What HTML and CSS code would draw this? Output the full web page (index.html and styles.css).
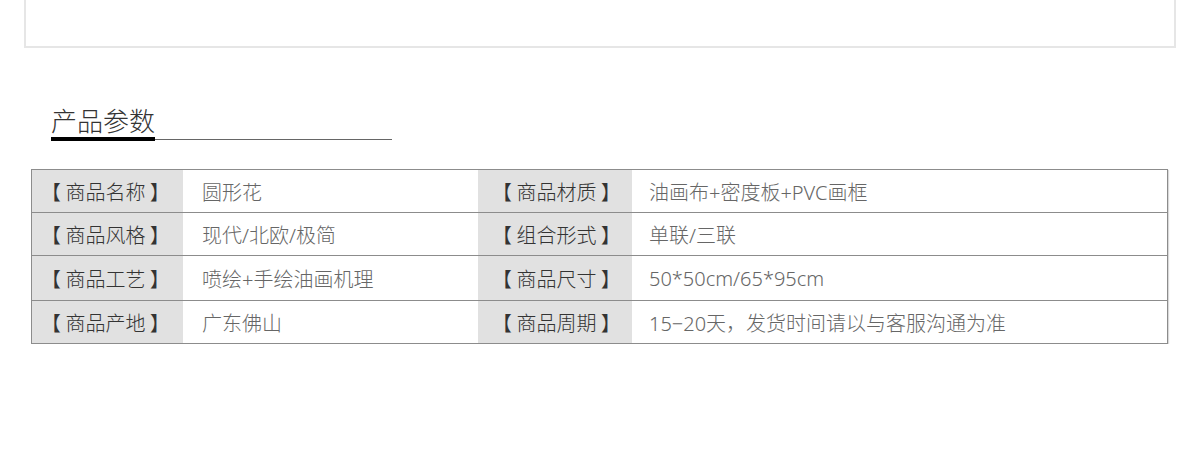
FILE: index.html
```html
<!DOCTYPE html>
<html lang="zh-CN">
<head>
<meta charset="utf-8">
<title>产品参数</title>
<link rel="stylesheet" href="styles.css">
</head>
<body>
<div class="top-box"></div>
<section class="params">
  <div class="title-wrap"><h2 class="title">产品参数</h2></div>
  <div class="spec-table">
    <div class="row">
      <div class="lab lab1">【 商品名称 】</div><div class="val val1">圆形花</div>
      <div class="lab lab2">【 商品材质 】</div><div class="val val2">油画布+密度板+PVC画框</div>
    </div>
    <div class="row">
      <div class="lab lab1">【 商品风格 】</div><div class="val val1">现代/北欧/极简</div>
      <div class="lab lab2">【 组合形式 】</div><div class="val val2">单联/三联</div>
    </div>
    <div class="row">
      <div class="lab lab1">【 商品工艺 】</div><div class="val val1">喷绘+手绘油画机理</div>
      <div class="lab lab2">【 商品尺寸 】</div><div class="val val2">50*50cm/65*95cm</div>
    </div>
    <div class="row">
      <div class="lab lab1">【 商品产地 】</div><div class="val val1">广东佛山</div>
      <div class="lab lab2">【 商品周期 】</div><div class="val val2">15−20天，发货时间请以与客服沟通为准</div>
    </div>
  </div>
</section>
</body>
</html>
```
FILE: styles.css
```css
html, body {
  margin: 0;
  padding: 0;
  background: #fff;
  font-family: "Noto Sans", "Noto Sans CJK SC", sans-serif;
}

.top-box {
  margin: 0 24px;
  height: 46px;
  border: 2px solid #e6e6e6;
  border-top: none;
}

.params {
  padding: 55px 0 0 51px;
}

.title-wrap {
  width: 341px;
  display: flex;
  align-items: flex-end;
  border-bottom: 1px solid #666;
}

.title {
  margin: 0 0 -2px 0;
  font-family: "Noto Sans CJK SC", sans-serif;
  font-size: 26px;
  font-weight: 300;
  line-height: 34px;
  color: #333;
  border-bottom: 4px solid #000;
}

.spec-table {
  margin: 29px 0 0 -20px;
  width: 1135px;
  border: 1px solid #8c8c8c;
  box-shadow: 1px 1px 1px rgba(0,0,0,0.15);
  display: flex;
  flex-direction: column;
}

.row {
  display: grid;
  grid-template-columns: 151px 295px 154px 1fr;
  height: 42px;
  border-top: 1px solid #8c8c8c;
}
.row:first-child { border-top: none; }
.row:nth-child(3) { height: 44px; }

.lab, .val {
  display: flex;
  align-items: center;
  font-size: 20px;
  font-weight: 300;
  white-space: nowrap;
}

.lab {
  font-family: "Noto Sans CJK SC", sans-serif;
  background: #e1e1e1;
  color: #333;
}
.lab1 { padding-left: 9px; }
.lab2 { padding-left: 14px; }

.val {
  color: #666;
}
.val1 { padding-left: 19px; }
.val2 { padding-left: 17px; }
```
